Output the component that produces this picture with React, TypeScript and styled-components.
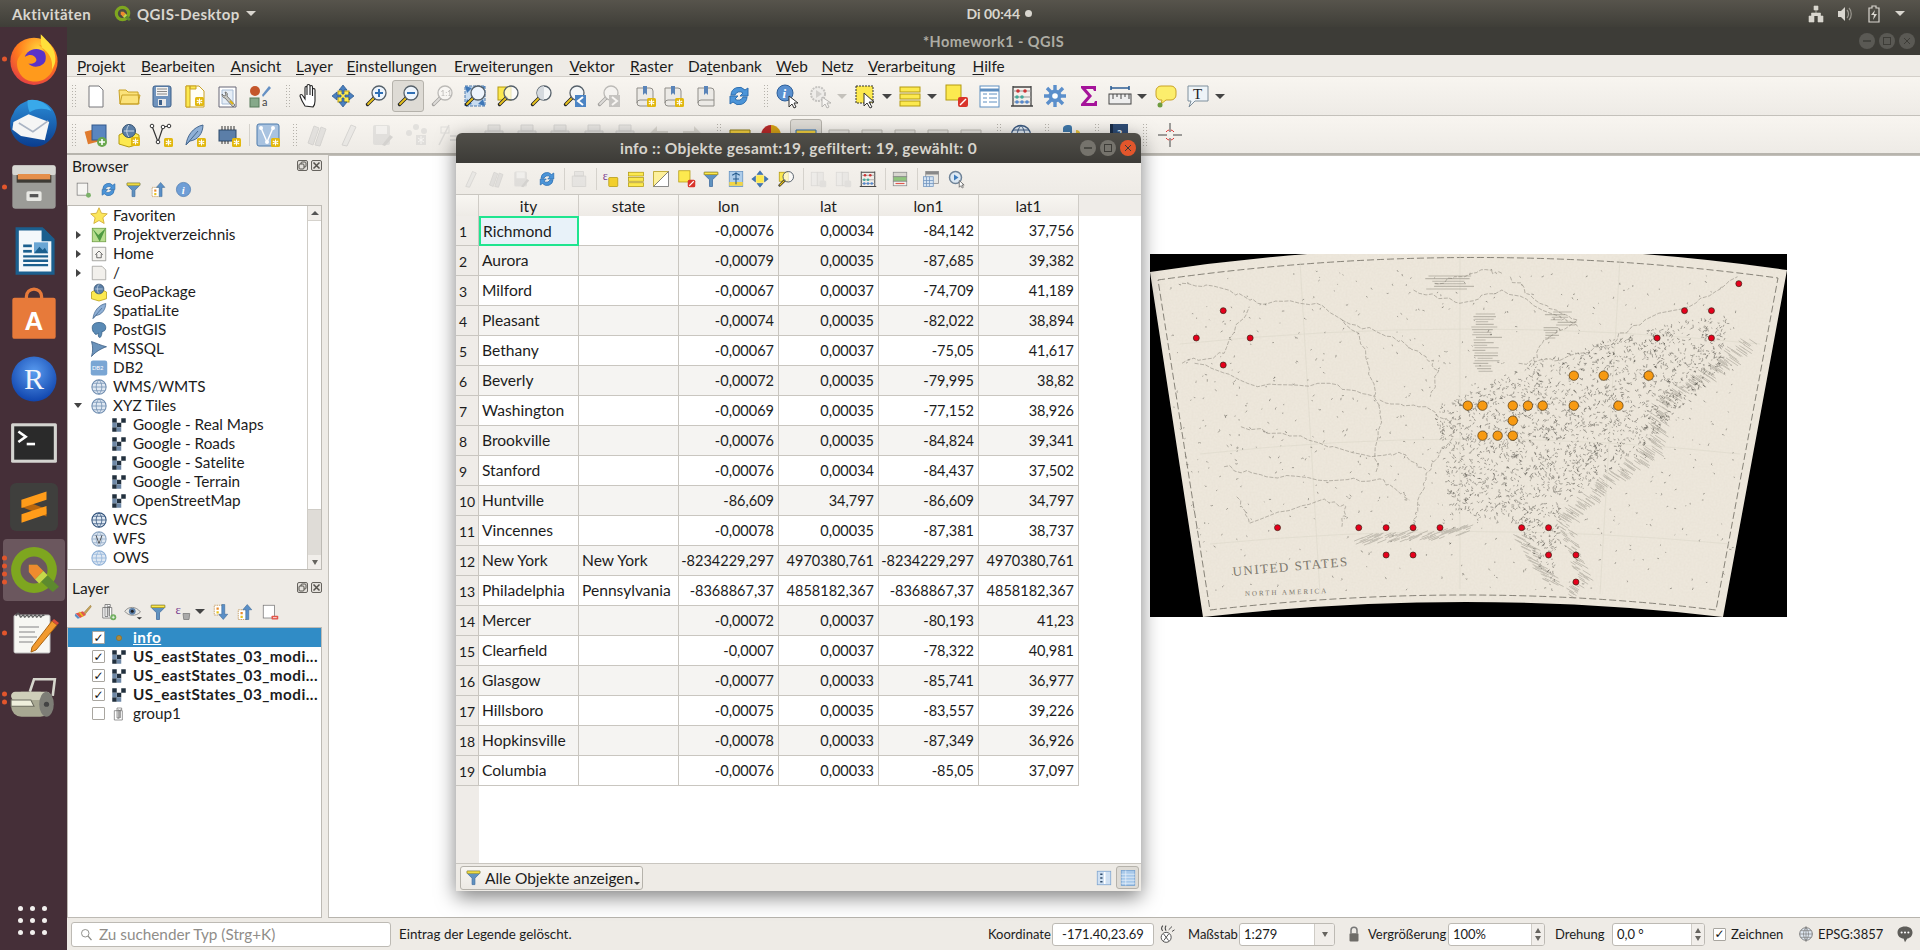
import React, { useMemo } from "react";
import styled, { createGlobalStyle, css } from "styled-components";

const UI = `"Lato", "Noto Sans", "Liberation Sans", sans-serif`;
const Y = "#fce94f", YS = "#b39a10";

const Global = createGlobalStyle`
  html, body { margin: 0; padding: 0; background: #3d3c37; }
  * { box-sizing: border-box; }
  body { font-family: ${UI}; color: #1c1c1c; overflow: hidden; }
`;

const Mag = ({ fill = "#fff", hx = "#e8c21c" }: any) => (
  <>
    <path d="M10 14 3.5 20.5" stroke="#222" strokeWidth="3.4" strokeLinecap="round" />
    <path d="M9.5 14.5 4 20" stroke={hx} strokeWidth="1.8" strokeLinecap="round" />
    <circle cx="15" cy="9" r="7" fill={fill} stroke="#55606a" strokeWidth="1.3" />
  </>
);
const Badge = ({ x = 14, y = 14 }: any) => (
  <>
    <rect x={x} y={y} width="9" height="9" rx="1.5" fill="#e2b80e" />
    <path d={`M${x + 4.5} ${y + 1.5}v6M${x + 1.8} ${y + 3}l5.4 3M${x + 7.2} ${y + 3}l-5.4 3`} stroke="#fff" strokeWidth="1.1" />
  </>
);
const Book = () => (
  <>
    <path d="M4 4h13a3 3 0 0 1 3 3v15H7a3 3 0 0 1-3-3z" fill="#eceae6" stroke="#8f8d88" />
    <path d="M4 19a3 3 0 0 1 3-3h13" fill="none" stroke="#8f8d88" />
    <path d="M10 2h4v9l-2-2-2 2z" fill="#5a84b8" />
  </>
);
const Globe = ({ c = "#6f8db0" }: any) => (
  <>
    <circle cx="12" cy="12" r="9.5" fill="#dfe8f2" stroke={c} strokeWidth="1.4" />
    <path d="M2.5 12h19M12 2.5c-5 5-5 14 0 19M12 2.5c5 5 5 14 0 19M4 7h16M4 17h16" fill="none" stroke={c} />
  </>
);
const Tiles = () => (
  <>
    <rect x="3" y="3" width="18" height="18" fill="#fff" />
    <path d="M3 3h6v6H3zM15 3h6v6h-6zM9 9h6v6H9zM3 15h6v6H3z" fill="#22303e" />
    <path d="M9 15h6v6H9zM3 9h6v6H3z" fill="#6e88a6" />
  </>
);
const Funnel = () => (
  <>
    <path d="M3 3h18v3l-7 7v9h-4v-9L3 6z" fill="#5f92c0" stroke="#3d6a9e" />
    <path d="M3 3h18v3H3z" fill={Y} stroke={YS} />
  </>
);
const Refresh = () => (
  <>
    <path d="M4 11a8 8 0 0 1 14-5l3-2v8h-8l3-3a5 5 0 0 0-8 2z" fill="#4b94d8" stroke="#2e6fb0" />
    <path d="M20 13a8 8 0 0 1-14 5l-3 2v-8h8l-3 3a5 5 0 0 0 8-2z" fill="#4b94d8" stroke="#2e6fb0" />
  </>
);
const Feather = () => (
  <>
    <path d="M4 22C5 13 11 4 21 2c0 8-5 15-13 16z" fill="#8fb0d6" stroke="#46688f" />
    <path d="M4 22 16 8" stroke="#46688f" fill="none" />
  </>
);
const Abc = ({ bg = "#f4d03f", st = "#8c7a1a", c = "#333" }: any) => (
  <>
    <path d="M2 7h20v11H2z" fill={bg} stroke={st} />
    <path d="M5 11h14M5 14h10" stroke={c} strokeWidth="1.5" />
  </>
);
const BlockY = () => (
  <>
    <path d="M2 12 12 7l10 5v9l-10 3-10-3z" fill={Y} stroke={YS} />
    <circle cx="12" cy="8" r="6.5" fill="#5a7ea6" stroke="#33506f" />
    <path d="M7 8h10M12 2c-3 3-3 9 0 12" stroke="#c7d6e6" fill="none" />
  </>
);

const ICONS: Record<string, React.ReactNode> = {
  doc: <path d="M5 2h10l4 4v17H5z" fill="#fff" stroke="#77777a" />,
  folder: <path d="M3 20 2 6h7l2 2h10l1 12zM3 20l2-9h18l-2 9z" fill="#fbe27a" stroke="#c9a227" />,
  save: (
    <>
      <rect x="3" y="2" width="18" height="21" rx="2" fill="#6f93bd" stroke="#3c5f88" />
      <rect x="6" y="3" width="12" height="9" fill="#f3f3f3" />
      <path d="M7 5h10M7 7.5h10M7 10h10" stroke="#888" />
      <rect x="8" y="15" width="8" height="7" fill="#e9e9e9" />
      <rect x="9" y="16" width="3" height="5" fill="#3c5f88" />
    </>
  ),
  saveas: (
    <>
      <path d="M3 2h13l5 5v16H3z" fill="#fffef5" stroke="#c9a227" />
      <path d="M3 2h4v21H3zM7 2h6v3H7z" fill={Y} stroke="#c9a227" />
      <Badge x={12} y={13} />
    </>
  ),
  props: (
    <>
      <path d="M3 3h17v20H3z" fill="#fff" stroke="#667" />
      <path d="M6 6h11v14H6z" fill="#e6eef7" stroke="#a8bdd6" />
      <path d="M9 8c2 0 3 2 2 4l8 9-2 2-8-9c-2 0-3-2-3-4l2 2 2-1z" fill="#c9c9c2" stroke="#555" strokeWidth=".7" />
      <path d="M14 17l3 3" stroke="#e0b515" strokeWidth="2" />
    </>
  ),
  style: (
    <>
      <circle cx="7" cy="7" r="5" fill="#c4562b" />
      <path d="M14 11 21 2l2 2-8 9z" fill="#6590c4" />
      <rect x="2" y="14" width="9" height="9" fill="#86a98a" stroke="#567a5a" />
      <text x="14" y="22" fontSize="11" fontFamily={UI} fill="#444">a</text>
    </>
  ),
  hand: (
    <path d="M7 22c-2-3-4-7-5-10 0-2 2-2 3 0l2 3V4c0-2 2-2 2 0v7-9c0-2 3-2 3 0v9-8c0-2 2.5-2 2.5 0v9-6c0-2 2.5-2 2.5 0v11c0 3-1 5-2 6z" fill="#fff" stroke="#222" strokeWidth="1.1" />
  ),
  pan: (
    <>
      <rect x="7" y="7" width="11" height="11" fill={Y} stroke={YS} />
      <path d="M12 1l4 5h-3v4h-2V6H8zM12 23l4-5h-3v-4h-2v4H8zM1 12l5-4v3h4v2H6v3zM23 12l-5-4v3h-4v2h4v3z" fill="#4a80c0" stroke="#2a5488" strokeWidth=".7" />
    </>
  ),
  zin: (
    <>
      <Mag fill="#eef5fd" />
      <path d="M15 5v8M11 9h8" stroke="#2f6fb5" strokeWidth="2" />
    </>
  ),
  zout: (
    <>
      <Mag fill="#eef5fd" />
      <path d="M11 9h8" stroke="#2f6fb5" strokeWidth="2" />
    </>
  ),
  z11: (
    <>
      <Mag />
      <text x="10.5" y="12" fontSize="8" fontFamily={UI} fill="#555">1:1</text>
    </>
  ),
  zfull: (
    <>
      <path d="M2 2h20v20H2z" fill="#c8dcf0" stroke="#4b79ad" strokeDasharray="3 1" />
      <path d="M2 2l7 2-5 5zM22 2l-7 2 5 5zM22 22l-7-2 5-5zM2 22l2-7 5 5z" fill="#3f78b8" />
      <Mag fill="#eef5fd" />
    </>
  ),
  zsel: (
    <>
      <rect x="2" y="3" width="13" height="13" fill={Y} stroke={YS} />
      <Mag fill="rgba(255,255,255,.7)" />
    </>
  ),
  zlay: (
    <>
      <Mag fill="#f4f6f7" />
      <path d="M15 2a7 7 0 0 0 0 14z" fill="#d5dadf" />
    </>
  ),
  zlast: (
    <>
      <Mag fill="#f4f6f7" />
      <rect x="13" y="11" width="11" height="12" fill="#4b84c4" />
      <path d="M21 13l-5 4 5 4" fill="none" stroke="#fff" strokeWidth="2" />
    </>
  ),
  znext: (
    <>
      <Mag fill="#f4f6f7" />
      <rect x="13" y="11" width="11" height="12" fill="#4b84c4" />
      <path d="M16 13l5 4-5 4" fill="none" stroke="#fff" strokeWidth="2" />
    </>
  ),
  bmkb: (
    <>
      <Book />
      <Badge x={14} y={14} />
    </>
  ),
  bmk: <Book />,
  refresh: <Refresh />,
  identify: (
    <>
      <circle cx="9" cy="9" r="8" fill="#5a90cf" stroke="#2e5f99" />
      <text x="6.5" y="14" fontSize="13" fontStyle="italic" fontWeight="700" fontFamily="Liberation Serif" fill="#fff">i</text>
      <path d="M13 12v11l3-3 2 4 2-1-2-4h4z" fill="#fff" stroke="#333" />
    </>
  ),
  action: (
    <>
      <circle cx="10" cy="10" r="7" fill="#dde6ee" stroke="#778" strokeWidth="2" strokeDasharray="2 1" />
      <path d="M8 6v8l6-4z" fill="#6f9fd0" />
      <path d="M14 13v10l3-3 2 4 2-1-2-4h4z" fill="#fff" stroke="#555" />
    </>
  ),
  select: (
    <>
      <rect x="2" y="2" width="17" height="17" fill={Y} stroke="#333" strokeDasharray="2 1" />
      <path d="M10 9v13l3-3 3 5 2-1-3-5h5z" fill="#fff" stroke="#333" />
    </>
  ),
  selattr: (
    <>
      <rect x="2" y="3" width="20" height="5" fill={Y} stroke={YS} />
      <rect x="2" y="10" width="20" height="5" fill={Y} stroke={YS} />
      <rect x="2" y="17" width="20" height="5" fill={Y} stroke={YS} />
    </>
  ),
  deselect: (
    <>
      <rect x="1" y="1" width="15" height="15" fill={Y} stroke={YS} />
      <rect x="13" y="13" width="10" height="10" rx="2" fill="#d9342b" />
      <path d="M15 21l6-6" stroke="#fff" strokeWidth="1.5" />
    </>
  ),
  table: (
    <>
      <rect x="3" y="2" width="19" height="21" fill="#fff" stroke="#5f8fc0" />
      <path d="M3 6h19" stroke="#5f8fc0" strokeWidth="3" />
      <path d="M6 10h4M6 14h4M6 18h4M12 10h8M12 14h8M12 18h8" stroke="#5f8fc0" />
    </>
  ),
  abacus: (
    <>
      <path d="M3 2v20M21 2v20M1 22h22M3 3h18" stroke="#444" strokeWidth="1.3" fill="none" />
      <path d="M3 7h18M3 13h18M3 18h18" stroke="#999" />
      <circle cx="8" cy="7" r="1.8" fill="#c33" /><circle cx="15" cy="7" r="1.8" fill="#c33" />
      <circle cx="7" cy="13" r="1.8" fill="#4a9" /><circle cx="12" cy="13" r="1.8" fill="#4a9" />
      <circle cx="7" cy="18" r="1.8" fill="#58c" /><circle cx="12" cy="18" r="1.8" fill="#58c" /><circle cx="17" cy="18" r="1.8" fill="#58c" />
    </>
  ),
  gear: (
    <>
      <path d="M12 1v6M12 17v6M1 12h6M17 12h6M4 4l4 4M16 16l4 4M20 4l-4 4M8 16l-4 4" stroke="#5b8fcb" strokeWidth="3.4" />
      <circle cx="12" cy="12" r="6.5" fill="#5b8fcb" />
      <circle cx="12" cy="12" r="2.8" fill="#fff" />
    </>
  ),
  sigma: <path d="M5 2h15v5h-2l-1-2H10l6 7-6 7h8l1-2h2v5H5v-2l7-8-7-8z" fill="#a5139a" />,
  measure: (
    <>
      <path d="M3 4h18M3 2v4M21 2v4" stroke="#2f5f95" strokeWidth="1.6" />
      <rect x="1" y="10" width="22" height="10" fill="#eee" stroke="#444" />
      <path d="M5 10v5M9 10v3M13 10v5M17 10v3M21 10v5" stroke="#444" />
    </>
  ),
  tip: (
    <>
      <path d="M2 7a5 5 0 0 1 5-5h10a5 5 0 0 1 5 5v4a5 5 0 0 1-5 5h-5l-5 4 1-4a5 5 0 0 1-6-5z" fill="#fcee6c" stroke="#c9a227" />
      <circle cx="6" cy="21" r="2.5" fill="#6e9c3f" />
    </>
  ),
  label: (
    <>
      <path d="M2 2h20v15H9l-6 6 2-6H2z" fill="#eef4f8" stroke="#7f8f9c" />
      <text x="7" y="15" fontSize="15" fontFamily="Liberation Serif" fill="#222">T</text>
    </>
  ),
  dsm: (
    <>
      <rect x="2" y="7" width="13" height="13" fill="#e07b2e" transform="rotate(-15 8 13)" />
      <rect x="8" y="2" width="14" height="15" fill="#5a86c0" stroke="#33598c" />
      <circle cx="18" cy="19" r="5" fill="#6aa84f" />
      <path d="M18 16v6M15 19h6" stroke="#fff" strokeWidth="1.6" />
    </>
  ),
  gpkg: (
    <>
      <BlockY />
      <Badge x={14} y={14} />
    </>
  ),
  block: <BlockY />,
  vnew: (
    <>
      <path d="M3 3l6 16 5-15" fill="none" stroke="#333" strokeWidth="1.2" />
      <path d="M14 4l6-1" stroke="#333" />
      <circle cx="3" cy="3" r="1.8" fill="#fff" stroke="#333" /><circle cx="9" cy="19" r="1.8" fill="#fff" stroke="#333" /><circle cx="14" cy="4" r="1.8" fill="#fff" stroke="#333" /><circle cx="20" cy="3" r="1.8" fill="#fff" stroke="#333" />
      <Badge x={15} y={15} />
    </>
  ),
  feather: (
    <>
      <Feather />
      <Badge x={15} y={15} />
    </>
  ),
  chip: (
    <>
      <rect x="2" y="7" width="17" height="11" fill="#5b7ea8" stroke="#2f4a6a" />
      <path d="M5 3v4M8 3v4M11 3v4M14 3v4M17 3v4M5 18v3M8 18v3M11 18v3" stroke="#333" />
      <Badge x={15} y={15} />
    </>
  ),
  vbox: (
    <>
      <rect x="1" y="1" width="22" height="22" rx="2" fill="#a9c3e0" stroke="#4d7aab" />
      <path d="M5 5l6 14 6-14" fill="none" stroke="#fff" strokeWidth="1.4" />
      <circle cx="5" cy="5" r="2" fill="#fff" /><circle cx="17" cy="5" r="2" fill="#fff" /><circle cx="11" cy="19" r="2" fill="#fff" />
      <Badge x={15} y={15} />
    </>
  ),
  pencils: <path d="M2 20 8 3l5 2-6 17zM9 22 15 4l5 2-6 17z" fill="#c9c5bc" stroke="#a9a59c" />,
  pencil: <path d="M5 22 14 2l5 2-9 19z" fill="#dedad2" stroke="#a9a59c" />,
  editsave: (
    <>
      <rect x="3" y="2" width="17" height="20" rx="2" fill="#c7c4bc" />
      <rect x="6" y="3" width="11" height="8" fill="#eee" />
      <path d="M12 22l8-10 3 2-8 9z" fill="#a9a59c" />
    </>
  ),
  nodes: (
    <>
      <circle cx="5" cy="10" r="3" fill="#c7c4bc" /><circle cx="12" cy="4" r="3" fill="#c7c4bc" /><circle cx="20" cy="8" r="3" fill="#c7c4bc" />
      <rect x="12" y="12" width="10" height="10" fill="#c7c4bc" />
      <path d="M17 13v8M14 15l6 4M20 15l-6 4" stroke="#fff" />
    </>
  ),
  delnode: (
    <>
      <path d="M2 22 12 2" stroke="#bbb" strokeWidth="1.5" />
      <rect x="4" y="4" width="8" height="6" fill="none" stroke="#bbb" />
      <path d="M13 13h9M13 17h9" stroke="#bbb" strokeWidth="2" />
    </>
  ),
  tools: <path d="M3 8h18v14H3zM6 2h12v6H6z" fill="#d6d3cb" stroke="#aaa69d" />,
  back: <path d="M2 12l9-9v5h11v8H11v5z" fill="#dad7d0" />,
  fwd: <path d="M22 12l-9-9v5H2v8h11v5z" fill="#dad7d0" />,
  abc: <Abc />,
  abcA: <Abc bg="#f4d03f" st="#2f6fb5" />,
  abcG: <Abc bg="#e8e6e1" st="#bdbab3" c="#bdbab3" />,
  colors: (
    <>
      <path d="M12 12V2a10 10 0 0 1 9 14z" fill="#d4a017" />
      <path d="M12 12l9 4A10 10 0 0 1 3 16z" fill="#3c8c3c" />
      <path d="M12 12 3 16A10 10 0 0 1 12 2z" fill="#b72a2a" />
    </>
  ),
  globe: <Globe c="#3c5a80" />,
  python: (
    <>
      <path d="M12 2c-5 0-6 2-6 4v3h7v1H4c-3 0-3 4-3 5s1 3 4 3V14h10V5c0-2-1-3-3-3z" fill="#3f77a8" />
      <path d="M12 23c5 0 6-2 6-4v-3h-7v-1h9c3 0 3-4 3-5s-1-3-4-3v4H9v9c0 2 1 3 3 3z" fill="#e7c33c" />
    </>
  ),
  helpbook: (
    <>
      <rect x="3" y="1" width="18" height="22" fill="#2e4b74" />
      <rect x="3" y="1" width="3" height="22" fill="#1a2c46" />
      <text x="10" y="15" fontSize="11" fontWeight="700" fontFamily={UI} fill="#dfe8f2">?</text>
    </>
  ),
  cross: (
    <>
      <path d="M12 0v9M12 15v9M0 12h9M15 12h9" stroke="#444" />
      <path d="M8 9a5 5 0 0 1 3-2M16 9a5 5 0 0 0-3-2M8 15a5 5 0 0 0 3 2M16 15a5 5 0 0 1-3 2" stroke="#d33" fill="none" />
    </>
  ),
  panelAdd: (
    <>
      <rect x="3" y="3" width="15" height="17" fill="#f6f5f2" stroke="#777" />
      <circle cx="19" cy="20" r="3.5" fill="#7cb26a" />
    </>
  ),
  funnel: <Funnel />,
  collapse: (
    <>
      <rect x="3" y="9" width="11" height="13" fill="#fff" stroke="#b98c4a" strokeDasharray="2 1" />
      <path d="M15 2l6 7h-4v13h-4V9H9z" fill="#5a8fc7" stroke="#34618f" strokeWidth=".7" />
      <rect x="6" y="12" width="3" height="3" fill="#e8892b" />
      <rect x="6" y="17" width="3" height="3" fill="#e8c21c" />
    </>
  ),
  expand: (
    <>
      <rect x="3" y="3" width="11" height="13" fill="#fff" stroke="#b98c4a" strokeDasharray="2 1" />
      <path d="M15 22l6-7h-4V2h-4v13H9z" fill="#5a8fc7" stroke="#34618f" strokeWidth=".7" />
      <rect x="6" y="6" width="3" height="3" fill="#e8892b" />
      <rect x="6" y="11" width="3" height="3" fill="#e8c21c" />
    </>
  ),
  info: (
    <>
      <circle cx="12" cy="12" r="10" fill="#6f9ed6" stroke="#4a78ad" />
      <text x="9.5" y="18" fontSize="15" fontWeight="700" fontStyle="italic" fontFamily="Liberation Serif" fill="#fff">i</text>
    </>
  ),
  brush: (
    <>
      <path d="M12 14 22 3l1 2-9 11z" fill="#c8a55a" stroke="#8a6a26" strokeWidth=".6" />
      <path d="M2 14l10-3 4 5-8 4z" fill="#e2574c" />
      <path d="M2 14l6 6-3 1-4-4z" fill="#5a8fc7" />
      <path d="M7 12l5 6" stroke="#e8c21c" strokeWidth="2" />
    </>
  ),
  addgroup: (
    <>
      <path d="M8 2h7v3h-3v13H8zM5 6h12v14H5z" fill="#fff" stroke="#666" />
      <path d="M11 3v14M14 5v13" stroke="#666" />
      <circle cx="19" cy="19" r="4" fill="#6fae5e" />
      <path d="M19 17v4M17 19h4" stroke="#fff" />
    </>
  ),
  eye: (
    <>
      <path d="M1 11c5-7 15-7 21 1-6 6-16 6-21-1z" fill="#e6e6e2" stroke="#777" />
      <circle cx="11" cy="11" r="4.5" fill="#5b7fa8" />
      <circle cx="11" cy="11" r="2" fill="#222" />
      <path d="M17 19h7l-3.5 3z" fill="#333" />
    </>
  ),
  expr: (
    <>
      <text x="2" y="14" fontSize="17" fontFamily="Liberation Serif" fill="#7a3d8f">ε</text>
      <path d="M12 14h9l-1 8h-7z" fill="#aaa" stroke="#777" />
    </>
  ),
  exprY: (
    <>
      <text x="1" y="13" fontSize="16" fontFamily="Liberation Serif" fill="#7a3d8f">ε</text>
      <rect x="9" y="10" width="12" height="12" rx="1" fill="#f2cf2c" stroke="#b39a10" />
    </>
  ),
  remove: (
    <>
      <rect x="3" y="3" width="15" height="17" fill="#fff" stroke="#777" />
      <rect x="14" y="17" width="9" height="5" rx="1" fill="#e2574c" />
      <path d="M16 19.5h5" stroke="#fff" />
    </>
  ),
  star: <path d="M12 1l3.3 7.3 7.700.8-5.800 5.200 1.700 7.700L12 18l-6.900 4 1.700-7.700L1 9.100l7.700-.8z" fill="#fbe65b" stroke="#c9a227" />,
  proj: (
    <>
      <rect x="3" y="3" width="18" height="18" fill="#b8de8f" stroke="#6a9a3e" />
      <path d="M3 3l8 9 10-9-8 18" fill="#4f9a42" />
    </>
  ),
  home: (
    <>
      <path d="M3 3h18v18H3z" fill="#f5f4f0" stroke="#8a8a85" />
      <path d="M7 13l5-5 5 5M9 12v5h6v-5" fill="none" stroke="#444" />
    </>
  ),
  dir: <path d="M3 3h13l5 5v13H3z" fill="#f2f0ec" stroke="#9a9a95" />,
  pg: <path d="M3 9c0-5 4-7 9-7s9 2 9 7c0 4-3 5-5 5 0 3-1 8-3 8s-2-3-2-6c-2 2-4 3-5 0-2-1-3-4-3-7z" fill="#5a8ab5" stroke="#2d5a82" />,
  mssql: <path d="M2 2c6 2 12 5 20 7-6 2-14 6-20 13 2-7 2-13 0-20z" fill="#6b93bb" stroke="#375a80" />,
  db2: (
    <>
      <rect x="1" y="2" width="22" height="20" rx="3" fill="#7aa6d4" />
      <text x="2.5" y="15" fontSize="7.8" fontFamily={UI} fill="#fff">DB2</text>
    </>
  ),
  wms: <Globe c="#6f8db0" />,
  wcs: <Globe c="#32537c" />,
  wfs: (
    <>
      <Globe c="#8fa8c4" />
      <path d="M8 7l4 11 4-11" fill="none" stroke="#333" />
    </>
  ),
  ows: <Globe c="#8fb1d8" />,
  tiles: <Tiles />,
  spatial: <Feather />,
  point: <circle cx="12" cy="12" r="3.5" fill="#b08a3a" stroke="#8d6f2c" />,
  grp: (
    <>
      <path d="M9 3h7v3h-3v12H9zM5 7h12v14H5z" fill="#fff" stroke="#666" />
      <path d="M11 5v14M14 7v11" stroke="#666" />
    </>
  ),
  fields: (
    <>
      <rect x="3" y="3" width="8" height="18" fill="#e8e6e1" stroke="#b9b6ae" />
      <rect x="11" y="3" width="8" height="18" fill="#dedbd4" stroke="#b9b6ae" />
      <rect x="14" y="14" width="9" height="9" rx="2" fill="#ccc9c2" />
    </>
  ),
  condFmt: (
    <>
      <rect x="3" y="3" width="18" height="6" fill="#d8d6d0" stroke="#888" />
      <rect x="3" y="9" width="18" height="6" fill="#8fc47c" stroke="#888" />
      <rect x="3" y="15" width="18" height="6" fill="#f2f1ed" stroke="#888" />
      <path d="M6 18h12" stroke="#e2574c" strokeWidth="1.5" />
    </>
  ),
  dock: (
    <>
      <rect x="5" y="2" width="17" height="16" fill="#e8e6e1" stroke="#888" />
      <rect x="5" y="2" width="17" height="4" fill="#888" />
      <rect x="2" y="9" width="13" height="13" fill="#d4e3f2" stroke="#6f93bd" />
      <path d="M2 14h13M2 18h13M6 9v13M10 9v13" stroke="#6f93bd" />
    </>
  ),
  run: (
    <>
      <circle cx="10" cy="10" r="8" fill="#dce8f3" stroke="#6f8397" strokeWidth="2" />
      <path d="M8 6v8l6-4z" fill="#3d7cbd" />
      <path d="M15 14v9l2-2 2 3 1.5-1-2-3h3z" fill="#fff" stroke="#555" />
    </>
  ),
  sel2: (
    <>
      <path d="M2 2h20L2 22z" fill="#fdf09b" stroke={YS} />
      <path d="M22 2v20H2z" fill="#fff" stroke="#666" />
    </>
  ),
  center: (
    <>
      <rect x="3" y="2" width="18" height="20" fill="#aecdea" stroke="#5f8fc0" />
      <rect x="3" y="16" width="18" height="5" fill="#f2d544" />
      <path d="M12 3v16M7 7l5-3 5 3M8 12h8" stroke="#245a8c" strokeWidth="1.4" fill="none" />
    </>
  ),
  pan2: (
    <>
      <rect x="7" y="7" width="10" height="10" fill={Y} />
      <path d="M12 1l4 5H8zM12 23l4-5H8zM1 12l5-4v8zM23 12l-5-4v8z" fill="#3f78b8" stroke="#244f83" strokeWidth=".6" />
    </>
  ),
  zsel2: (
    <>
      <rect x="3" y="3" width="12" height="12" fill={Y} stroke={YS} />
      <Mag fill="rgba(255,255,255,.65)" />
    </>
  ),
  form: (
    <>
      <rect x="3" y="3" width="18" height="18" fill="#cfe0f2" stroke="#7ba3cf" />
      <path d="M7 7h3M7 12h3M7 17h3" stroke="#2f4a6a" strokeWidth="2" />
      <path d="M13 4v16" stroke="#fff" strokeWidth="2" />
    </>
  ),
  grid: (
    <>
      <rect x="3" y="2" width="18" height="20" fill="#a9c9ea" stroke="#6f9ed0" />
      <path d="M9 2v20M3 7h18M3 11h18M3 15h18M3 19h18" stroke="#e8f1fa" />
    </>
  ),
  search: (
    <>
      <circle cx="10" cy="10" r="6" fill="none" stroke="#8a8a85" strokeWidth="1.5" />
      <path d="M14.5 14.5 20 21" stroke="#8a8a85" strokeWidth="2" />
    </>
  ),
  pointer: (
    <>
      <path d="M7 2c-2 2-2 5 0 6M11 2c-2 2-1 5 0 6" fill="none" stroke="#444" strokeWidth="1.3" />
      <circle cx="11" cy="16" r="6" fill="#fff" stroke="#333" />
      <path d="M8 12l6 8M14 12l-6 8M18 3l-4 4M21 7l-3 2" stroke="#333" />
    </>
  ),
  lock: (
    <>
      <path d="M8 11V7a4 4 0 0 1 8 0v4" fill="none" stroke="#777" strokeWidth="2" />
      <rect x="6" y="11" width="12" height="11" rx="1.5" fill="#6e6c68" />
    </>
  ),
  crs: (
    <>
      <Globe c="#777" />
      <path d="M12 0v24" stroke="#777" />
    </>
  ),
  msg: (
    <>
      <path d="M12 2c6 0 10 3 10 8s-4 8-7 8l-3 5-2-5c-4 0-8-3-8-8s4-8 10-8z" fill="#5e5d59" />
      <circle cx="7.5" cy="10" r="1.4" fill="#fff" /><circle cx="12" cy="10" r="1.4" fill="#fff" /><circle cx="16.5" cy="10" r="1.4" fill="#fff" />
    </>
  ),
};

const DOCK: Record<string, React.ReactNode> = {
  firefox: (
    <>
      <defs>
        <radialGradient id="ffa" cx=".6" cy=".25" r=".9"><stop offset="0" stopColor="#ffd43a" /><stop offset=".5" stopColor="#ff7a1c" /><stop offset="1" stopColor="#d92a52" /></radialGradient>
      </defs>
      <circle cx="24" cy="26" r="21" fill="url(#ffa)" />
      <circle cx="26" cy="26" r="11" fill="#5b32c8" />
      <path d="M16 22c5-3 9-1 10 2 1 3-4 5-7 4 3 4 12 4 15-2 2-6-2-12-6-15 6 1 14 6 14 16 0 10-9 18-19 17C13 43 8 34 9 26c1-4 4-7 7-10-1 3-1 5 0 6z" fill="#ff9a1c" />
      <path d="M30 2c6 6 13 12 13 22 0 4-1 6-3 9 1-9-3-15-9-19-1-4-1-8-1-12z" fill="#ffe03a" />
    </>
  ),
  thunder: (
    <>
      <defs>
        <linearGradient id="tba" x1="0" y1="0" x2="0" y2="1"><stop offset="0" stopColor="#2b8cd6" /><stop offset="1" stopColor="#0a3d8f" /></linearGradient>
      </defs>
      <path d="M24 3c12 0 21 9 21 21S36 46 24 46 2 37 2 25c0-4 1-7 3-10 2-6 9-12 19-12z" fill="url(#tba)" />
      <path d="M5 23l14-7 19 7-4 17-22-4-8-6z" fill="#f5f5f5" />
      <path d="M10 24l13 8 14-10" fill="none" stroke="#aab4c4" strokeWidth="1.5" />
      <path d="M18 3c8-2 18 2 22 10-6-3-14-3-20 1-2-4-2-8-2-11z" fill="#39a9ea" />
    </>
  ),
  files: (
    <>
      <rect x="4" y="4" width="40" height="40" rx="3" fill="#9b9b97" />
      <rect x="4" y="4" width="40" height="9" rx="2" fill="#d8d8d3" />
      <rect x="8" y="13" width="32" height="7" fill="#3d3a34" />
      <rect x="9" y="12" width="30" height="5" fill="#e58f4b" />
      <rect x="17" y="28" width="14" height="9" rx="1.5" fill="#e8e8e4" />
      <rect x="20" y="30.5" width="8" height="3" fill="#555" />
    </>
  ),
  writer: (
    <>
      <path d="M7 2h25l11 11v33H7z" fill="#1b5f8e" />
      <path d="M10 5h21v10h9v28H10z" fill="#f4f8fb" />
      <path d="M33 3l8 9h-8z" fill="#1b5f8e" />
      <rect x="14" y="18" width="8" height="2.5" fill="#1b5f8e" />
      <rect x="14" y="23" width="8" height="2.5" fill="#1b5f8e" />
      <rect x="24" y="16" width="13" height="10" fill="#6aa6d4" />
      <path d="M24 26l5-6 3 3 2-2 3 5z" fill="#1b5f8e" />
      <path d="M14 29h23M14 33h23M14 37h23" stroke="#1b5f8e" strokeWidth="2.2" />
    </>
  ),
  store: (
    <>
      <rect x="4" y="8" width="40" height="38" rx="2" fill="#e77a3a" />
      <path d="M17 11V7a7 7 0 0 1 14 0v4" fill="none" stroke="#e77a3a" strokeWidth="3" />
      <text x="24" y="38" textAnchor="middle" fontSize="24" fontWeight="700" fontFamily="Liberation Sans" fill="#fff">A</text>
    </>
  ),
  r: (
    <>
      <defs>
        <radialGradient id="rb" cx=".5" cy=".35" r=".7"><stop offset="0" stopColor="#5a9cf0" /><stop offset="1" stopColor="#0a3ea8" /></radialGradient>
      </defs>
      <circle cx="24" cy="24" r="22.5" fill="url(#rb)" />
      <text x="24" y="34" textAnchor="middle" fontSize="30" fontFamily="Liberation Serif" fill="#f2f5fa">R</text>
    </>
  ),
  term: (
    <>
      <rect x="2" y="5" width="44" height="38" rx="1.5" fill="#d4d4d0" />
      <rect x="5" y="8" width="38" height="32" fill="#2a2a2a" />
      <path d="M9 13l7 5-7 5" fill="none" stroke="#fff" strokeWidth="2.5" />
      <path d="M17 25h8" stroke="#fff" strokeWidth="2.5" />
    </>
  ),
  sublime: (
    <>
      <rect x="1" y="1" width="46" height="46" rx="6" fill="#3f3f3d" />
      <path d="M12 17l24 9v7l-24-9z" fill="#b8660e" />
      <path d="M36 9v8l-24 8v-8z" fill="#ff9c1a" />
      <path d="M12 31v8l24-8v-8z" fill="#ff9c1a" />
    </>
  ),
  qgis: (
    <>
      <path d="M24 2a22 22 0 1 0 0 44 22 22 0 0 0 0-44zm0 9a13 13 0 1 1 0 26 13 13 0 0 1 0-26z" fill="#7ea61f" />
      <path d="M19 19h8l21 21-6 5-23-20z" fill="#5d8a2e" />
      <path d="M19 19h8l6 6-8 8-6-7z" fill="#ee8b2e" />
      <path d="M25 33l8-8 4 4-8 8z" fill="#c6d84a" />
    </>
  ),
  gedit: (
    <>
      <rect x="4" y="6" width="36" height="38" rx="1.5" fill="#f7f7f3" stroke="#bbb" />
      <path d="M6 7c1-4 3-4 4 0s3-4 4 0 3-4 4 0 3-4 4 0 3-4 4 0 3-4 4 0 3-4 4 0" fill="none" stroke="#555" strokeWidth="1.2" />
      <path d="M9 18h20M9 23h16M9 28h18M9 33h14" stroke="#aaa" strokeWidth="1.4" />
      <path d="M22 38l20-26 5 4-21 25-5 2z" fill="#f29a2e" stroke="#a86412" />
      <path d="M42 12l2-2 5 4-2 2z" fill="#d94c3a" />
    </>
  ),
  roller: (
    <>
      <path d="M20 18l4-12h20l-2 16" fill="none" stroke="#d6d6cd" strokeWidth="2.5" />
      <rect x="2" y="18" width="38" height="24" rx="10" fill="#a8a892" />
      <rect x="2" y="18" width="38" height="8" rx="4" fill="#cfcfba" />
      <ellipse cx="36" cy="30" rx="7" ry="12" fill="#7d7d76" />
      <circle cx="36" cy="30" r="2.5" fill="#444" />
      <path d="M2 32h22l-3-6H2z" fill="#efefdc" stroke="#6b6b5e" />
    </>
  ),
};

const IcoSvg = styled.svg<{ $dim?: boolean }>`
  display: block;
  flex: none;
  overflow: visible;
  ${(p) =>
    p.$dim &&
    css`
      filter: grayscale(1) opacity(0.38);
    `}
`;
const Ico = ({ k, s = 24, dim }: { k: string; s?: number; dim?: boolean }) => (
  <IcoSvg viewBox="0 0 24 24" width={s} height={s} $dim={dim}>
    {ICONS[k]}
  </IcoSvg>
);

const Root = styled.div`
  position: relative;
  width: 1920px;
  height: 950px;
  overflow: hidden;
  display: flex;
  flex-direction: column;
  font-size: 14.5px;
`;
const TopBar = styled.header`
  height: 27px;
  flex: none;
  display: flex;
  align-items: center;
  position: relative;
  background: linear-gradient(#57544c, #3f3e38);
  color: #d9d6cf;
  font-weight: 700;
  font-size: 15px;
  letter-spacing: 0.4px;
`;
const TopItem = styled.span<{ $ml: number; $w: number; $fs?: number }>`
  margin-left: ${(p) => p.$ml}px;
  width: ${(p) => p.$w}px;
  flex: none;
  white-space: nowrap;
  display: flex;
  align-items: center;
  ${(p) => (p.$fs ? `font-size: ${p.$fs}px; letter-spacing: 0;` : "")}
`;
const Caret = styled.span<{ $ml?: number; $c?: string }>`
  display: inline-block;
  margin-left: ${(p) => p.$ml ?? 6}px;
  border-left: 5px solid transparent;
  border-right: 5px solid transparent;
  border-top: 5px solid ${(p) => p.$c ?? "#d9d6cf"};
`;
const Tray = styled.div`
  margin-left: auto;
  display: flex;
  align-items: center;
  gap: 13px;
  padding-right: 15px;
`;
const RecDot = styled.span`
  width: 7px;
  height: 7px;
  border-radius: 50%;
  background: #d9d6cf;
  margin-left: 5px;
`;
const Body = styled.div`
  flex: 1;
  display: flex;
  min-height: 0;
`;
const Dock = styled.nav`
  width: 67px;
  flex: none;
  display: flex;
  flex-direction: column;
  align-items: center;
  background: #452f38;
  position: relative;
`;
const DockSlot = styled.div<{ $h: number; $active?: boolean }>`
  position: relative;
  width: 62px;
  height: ${(p) => p.$h}px;
  display: flex;
  align-items: center;
  justify-content: center;
  border-radius: 4px;
  background: ${(p) => (p.$active ? "#6b575e" : "transparent")};
`;
const Pips = styled.div`
  position: absolute;
  left: -1px;
  top: 50%;
  transform: translateY(-50%);
  display: flex;
  flex-direction: column;
  gap: 3px;
`;
const Pip = styled.span`
  width: 5px;
  height: 5px;
  border-radius: 50%;
  background: #e2562c;
`;
const AppsGrid = styled.div`
  position: absolute;
  bottom: 15px;
  left: 18px;
  display: grid;
  grid-template-columns: repeat(3, 5px);
  gap: 7px;
`;
const AppDot = styled.span`
  width: 5px;
  height: 5px;
  border-radius: 50%;
  background: #f2f0ee;
`;
const AppWin = styled.div`
  flex: 1;
  min-width: 0;
  display: flex;
  flex-direction: column;
  background: #eeebe6;
`;
const TitleBar = styled.div`
  height: 28px;
  flex: none;
  display: flex;
  align-items: center;
  justify-content: center;
  position: relative;
  background: #3d3c37;
  color: #aeaca4;
  font-weight: 700;
  font-size: 14.5px;
  letter-spacing: 0.45px;
`;
const WinBtns = styled.div`
  position: absolute;
  right: 5px;
  top: 50%;
  transform: translateY(-50%);
  display: flex;
  gap: 4px;
`;
const WinBtn = styled.span<{ $bg: string; $fg: string }>`
  width: 16px;
  height: 16px;
  border-radius: 50%;
  background: ${(p) => p.$bg};
  color: ${(p) => p.$fg};
  display: flex;
  align-items: center;
  justify-content: center;
`;
const MenuBar = styled.div`
  height: 22px;
  flex: none;
  display: flex;
  align-items: center;
  padding-left: 10px;
  border-bottom: 1px solid #d3cfc9;
  background: #eeebe6;
`;
const MenuItem = styled.span<{ $w: number }>`
  width: ${(p) => p.$w}px;
  white-space: nowrap;
  font-size: 15.4px;
  u {
    text-decoration-thickness: 1px;
    text-underline-offset: 2px;
  }
`;
const Toolbar = styled.div<{ $last?: boolean }>`
  height: 39px;
  flex: none;
  display: flex;
  align-items: center;
  background: linear-gradient(#f8f5f0, #eeebe6);
  border-bottom: ${(p) => (p.$last ? "2px solid #b7b4ad" : "1px solid #c4c1bb")};
`;
const WinToolbar = styled.div`
  height: 32px;
  flex: none;
  display: flex;
  align-items: center;
  background: linear-gradient(#f4f1ec, #eeebe6);
  border-bottom: 1px solid #c9c6c0;
`;
const Tool = styled.div<{ $ml: number; $active?: boolean }>`
  position: relative;
  width: 24px;
  height: 24px;
  flex: none;
  margin-left: ${(p) => p.$ml}px;
  display: flex;
  align-items: center;
  justify-content: center;
  ${(p) =>
    p.$active &&
    css`
      &::before {
        content: "";
        position: absolute;
        inset: -4px;
        border: 1px solid #b5b2ab;
        border-radius: 3px;
        background: #dedbd5;
      }
      & > * {
        position: relative;
      }
    `}
`;
const Grip = styled.span`
  width: 6px;
  height: 24px;
  background-image: radial-gradient(circle, #b5b2ab 0.8px, transparent 1px);
  background-size: 3px 3px;
`;
const Sep = styled.span`
  width: 1px;
  height: 22px;
  background: #d5d2cc;
`;
type TI = { k: string; c: number; dim?: boolean; active?: boolean };
const Tools = ({ items, start, s = 24 }: { items: TI[]; start: number; s?: number }) => {
  let prev = start;
  return (
    <>
      {items.map((it, i) => {
        const ml = it.c - 12 - prev;
        prev = it.c + 12;
        return (
          <Tool key={i} $ml={ml} $active={it.active}>
            {it.k === "grip" ? <Grip /> : it.k === "sep" ? <Sep /> : it.k === "drop" ? <Caret $ml={0} $c={it.dim ? "#c4c1bb" : "#444"} /> : <Ico k={it.k} dim={it.dim} s={s} />}
          </Tool>
        );
      })}
    </>
  );
};
const t = (k: string, c: number, o: Partial<TI> = {}): TI => ({ k, c, ...o });
const dm = { dim: true };
const T1: TI[] = [
  t("grip", 74), t("doc", 96), t("folder", 129), t("save", 162), t("saveas", 195), t("props", 228), t("style", 260), t("grip", 288),
  t("hand", 310), t("pan", 343), t("zin", 376), t("zout", 408, { active: true }), t("z11", 442, dm), t("zfull", 475), t("zsel", 508), t("zlay", 541),
  t("zlast", 574), t("znext", 608, dm), t("bmkb", 645), t("bmkb", 673), t("bmk", 706), t("refresh", 739), t("grip", 766), t("identify", 788),
  t("action", 820, dm), t("drop", 842, dm), t("select", 866), t("drop", 887), t("selattr", 910), t("drop", 932), t("deselect", 957), t("table", 989),
  t("abacus", 1022), t("gear", 1055), t("sigma", 1088), t("measure", 1120), t("drop", 1142), t("tip", 1166), t("label", 1198), t("drop", 1220),
];
const T2: TI[] = [
  t("grip", 74), t("dsm", 96), t("gpkg", 129), t("vnew", 161), t("feather", 194), t("chip", 229), t("sep", 249), t("vbox", 268), t("grip", 295),
  t("pencils", 318, dm), t("pencil", 349, dm), t("editsave", 382, dm), t("nodes", 416, dm), t("delnode", 449, dm), t("tools", 494, dm), t("tools", 527, dm), t("tools", 560, dm),
  t("tools", 594, dm), t("tools", 625, dm), t("back", 658), t("fwd", 693), t("grip", 719), t("abc", 740), t("colors", 771), t("abcA", 806, { active: true }),
  t("abcG", 839), t("abcG", 872), t("abcG", 905), t("abcG", 938), t("abcG", 971), t("grip", 999), t("globe", 1021), t("grip", 1047), t("python", 1069),
  t("grip", 1097), t("helpbook", 1119), t("grip", 1145), t("cross", 1170),
];
const WT: TI[] = [
  t("pencil", 471, dm), t("pencils", 497, dm), t("editsave", 521, dm), t("refresh", 547), t("sep", 564), t("tools", 579, dm), t("sep", 596), t("exprY", 611),
  t("selattr", 636), t("sel2", 661), t("deselect", 687), t("funnel", 711), t("center", 736), t("pan2", 760), t("zsel2", 786), t("sep", 803),
  t("fields", 818, dm), t("fields", 843, dm), t("abacus", 868), t("sep", 885), t("condFmt", 900), t("sep", 917), t("dock", 931), t("run", 957),
];

const Main = styled.div`
  flex: 1;
  display: flex;
  min-height: 0;
`;
const Sidebar = styled.aside`
  width: 262px;
  flex: none;
  display: flex;
  flex-direction: column;
`;
const PanelHead = styled.div`
  height: 21px;
  flex: none;
  width: 255px;
  display: flex;
  align-items: center;
  padding: 0 0 0 5px;
  font-size: 15.5px;
`;
const PanelBtns = styled.div`
  margin-left: auto;
  display: flex;
  gap: 3px;
`;
const PanelBtn = styled.span`
  width: 11px;
  height: 11px;
  display: block;
  border: 1px solid #66635e;
  border-radius: 2px;
  background: #e4e1dc;
  color: #55524d;
`;
const PanelTools = styled.div`
  height: 29px;
  flex: none;
  width: 255px;
  display: flex;
  align-items: center;
  padding-bottom: 2px;
`;
const TreeBox = styled.div<{ $h: number }>`
  width: 255px;
  height: ${(p) => p.$h}px;
  flex: none;
  background: #fff;
  border: 1px solid #bdbab4;
  display: flex;
  overflow: hidden;
`;
const TreeList = styled.div`
  flex: 1;
  min-width: 0;
`;
const TreeRow = styled.div<{ $indent?: number; $sel?: boolean }>`
  height: 19px;
  display: flex;
  align-items: center;
  padding-left: ${(p) => 2 + (p.$indent ?? 0)}px;
  white-space: nowrap;
  font-size: 15.3px;
  line-height: 17px;
  background: ${(p) => (p.$sel ? "#308cc6" : "transparent")};
  color: ${(p) => (p.$sel ? "#fff" : "inherit")};
`;
const TreeArrow = styled.span<{ $open?: boolean; $none?: boolean }>`
  width: 16px;
  flex: none;
  display: flex;
  justify-content: center;
  margin-right: 4px;
  &::before {
    content: "";
    display: ${(p) => (p.$none ? "none" : "block")};
    ${(p) =>
      p.$open
        ? css`
            border-left: 4.5px solid transparent;
            border-right: 4.5px solid transparent;
            border-top: 5px solid #444;
          `
        : css`
            border-top: 4.5px solid transparent;
            border-bottom: 4.5px solid transparent;
            border-left: 5px solid #444;
          `}
  }
`;
const TreeLabel = styled.span<{ $bold?: boolean; $under?: boolean }>`
  margin-left: 5px;
  padding-bottom: 1px;
  font-weight: ${(p) => (p.$bold ? 700 : 400)};
  letter-spacing: ${(p) => (p.$bold ? "0.45px" : "0")};
  text-decoration: ${(p) => (p.$under ? "underline" : "none")};
`;
const Scroll = styled.div`
  width: 14px;
  flex: none;
  display: flex;
  flex-direction: column;
  border-left: 1px solid #cfccc6;
  background: #fff;
`;
const ScrollBtn = styled.div`
  height: 14px;
  flex: none;
  background: #f1eeea;
  display: flex;
  align-items: center;
  justify-content: center;
`;
const ScrollGroove = styled.div`
  flex: 1;
  border-top: 1px solid #d5d2cc;
`;
const ScrollThumb = styled.div`
  height: 46px;
  flex: none;
  background: #dfdcd7;
  border-top: 1px solid #cfccc6;
`;
const UpArrow = styled.span`
  border-left: 4px solid transparent;
  border-right: 4px solid transparent;
  border-bottom: 4px solid #555;
`;
const Divider = styled.div`
  height: 7px;
  flex: none;
`;
const CheckBox = styled.span`
  width: 13px;
  height: 13px;
  flex: none;
  background: #fff;
  border: 1px solid #a9a6a0;
  border-radius: 1px;
  display: flex;
  align-items: center;
  justify-content: center;
  font-size: 12px;
  line-height: 1;
  font-weight: 700;
  color: #111;
  font-family: "DejaVu Sans", sans-serif;
`;
const LayerIcon = styled.span`
  margin-left: 4px;
  margin-right: -1px;
  width: 20px;
  flex: none;
  display: flex;
  justify-content: center;
`;
const Canvas = styled.main`
  flex: 1;
  min-width: 0;
  background: #fff;
  border: 1px solid #c3c0ba;
  border-right: 0;
  border-bottom: 1px solid #b7b4ad;
  margin-left: -1px;
  padding: 98px 0 0 821px;
`;
const Status = styled.footer`
  height: 32px;
  flex: none;
  display: flex;
  align-items: center;
  background: #eeebe6;
  font-size: 13px;
`;
const SearchBox = styled.div`
  margin-left: 4px;
  width: 320px;
  height: 25px;
  background: #fff;
  border: 1px solid #bdbab4;
  border-radius: 3px;
  display: flex;
  align-items: center;
  padding-left: 7px;
  color: #8f8d89;
  gap: 5px;
  font-size: 15.3px;
`;
const SLabel = styled.span<{ $ml: number; $w?: number; $fs?: number }>`
  margin-left: ${(p) => p.$ml}px;
  ${(p) => (p.$w ? `width: ${p.$w}px;` : "")}
  ${(p) => (p.$fs ? `font-size: ${p.$fs}px;` : "")}
  white-space: nowrap;
  flex: none;
`;
const SInput = styled.div<{ $w: number; $ml: number; $center?: boolean }>`
  width: ${(p) => p.$w}px;
  margin-left: ${(p) => p.$ml}px;
  flex: none;
  height: 23px;
  background: #fff;
  border: 1px solid #bdbab4;
  border-radius: 3px;
  display: flex;
  align-items: center;
  padding-left: ${(p) => (p.$center ? 0 : 4)}px;
  justify-content: ${(p) => (p.$center ? "center" : "flex-start")};
  position: relative;
  overflow: hidden;
`;
const Spin = styled.div`
  margin-left: auto;
  width: 13px;
  align-self: stretch;
  background: #f1eeea;
  border-left: 1px solid #cfccc6;
  display: flex;
  flex-direction: column;
  align-items: center;
  justify-content: center;
  gap: 3px;
`;
const DownA = styled.span`
  border-left: 3.5px solid transparent;
  border-right: 3.5px solid transparent;
  border-top: 5px solid #66645f;
`;
const UpA = styled.span`
  border-left: 3.5px solid transparent;
  border-right: 3.5px solid transparent;
  border-bottom: 5px solid #66645f;
`;
const ComboBtn = styled.div`
  margin-left: auto;
  width: 20px;
  align-self: stretch;
  background: #f1eeea;
  border-left: 1px solid #cfccc6;
  display: flex;
  align-items: center;
  justify-content: center;
`;
const SIcon = styled.span<{ $ml: number }>`
  margin-left: ${(p) => p.$ml}px;
  flex: none;
  display: flex;
`;
const FloatWin = styled.section`
  position: absolute;
  left: 456px;
  top: 133px;
  width: 685px;
  height: 758px;
  display: flex;
  flex-direction: column;
  background: #eeebe6;
  border-radius: 6px 6px 0 0;
  box-shadow: 0 6px 20px rgba(0, 0, 0, 0.5);
`;
const FloatTitle = styled.div`
  height: 30px;
  flex: none;
  position: relative;
  display: flex;
  align-items: center;
  justify-content: center;
  border-radius: 6px 6px 0 0;
  background: linear-gradient(#514f49, #3c3b37);
  color: #d7d4cd;
  font-weight: 700;
  font-size: 15.5px;
  letter-spacing: 0.32px;
`;
const FloatBtns = styled.div`
  position: absolute;
  right: 5px;
  top: 7px;
  display: flex;
  gap: 4px;
`;
const HeaderRow = styled.div`
  height: 21px;
  flex: none;
  display: grid;
  grid-template-columns: 23px repeat(6, 100px) 1fr;
  background: #efece8;
`;
const HeadCell = styled.div`
  display: flex;
  align-items: center;
  justify-content: center;
  background: linear-gradient(#f8f6f2, #eeebe6);
  border-right: 1px solid #cfccc6;
  font-size: 15.5px;
`;
const HeadBlank = styled.div`
  background: #efece8;
`;
const TableBody = styled.div`
  flex: 1;
  min-height: 0;
  background: #fff;
  display: flex;
  flex-direction: column;
  position: relative;
`;
const Row = styled.div`
  height: 30px;
  flex: none;
  display: grid;
  grid-template-columns: 23px repeat(6, 100px) 1fr;
`;
const RowNum = styled.div`
  background: #efece8;
  border-right: 1px solid #c9c6c0;
  border-bottom: 1px solid #c9c6c0;
  display: flex;
  align-items: center;
  padding-left: 3px;
  font-size: 14px;
  padding-top: 2px;
`;
const Cell = styled.div<{ $right?: boolean; $odd?: boolean; $cur?: boolean }>`
  display: flex;
  align-items: center;
  justify-content: ${(p) => (p.$right ? "flex-end" : "flex-start")};
  padding: 0 4px 1px 3px;
  background: ${(p) => (p.$cur ? "#e8f2f9" : p.$odd ? "#fff" : "#f5f4f2")};
  border-right: 1px solid #c9c6c0;
  border-bottom: 1px solid #c9c6c0;
  font-size: ${(p) => (p.$right ? "14.5px" : "15.6px")};
  white-space: nowrap;
  overflow: hidden;
  ${(p) =>
    p.$cur &&
    css`
      border: 2px solid #1fe58f;
      padding-left: 2px;
    `}
`;
const RowFill = styled.div`
  background: #fff;
`;
const NumFill = styled.div`
  width: 23px;
  flex: 1;
  background: #efece8;
`;
const BottomBar = styled.div`
  height: 28px;
  flex: none;
  display: flex;
  align-items: center;
  background: #eeebe6;
  border-top: 1px solid #c9c6c0;
  padding: 0 2px 0 4px;
`;
const FilterBtn = styled.div`
  height: 24px;
  width: 183px;
  display: flex;
  align-items: center;
  gap: 3px;
  padding-left: 4px;
  background: linear-gradient(#f8f6f2, #ece9e4);
  border: 1px solid #b5b2ab;
  border-radius: 3px;
  font-size: 15.5px;
  white-space: nowrap;
  position: relative;
`;
const SmallCaret = styled.span`
  position: absolute;
  right: 2px;
  bottom: 4px;
  border-left: 3px solid transparent;
  border-right: 3px solid transparent;
  border-top: 3px solid #333;
`;
const ViewBtn = styled.div<{ $active?: boolean; $push?: boolean }>`
  width: 23px;
  height: 23px;
  margin-left: ${(p) => (p.$push ? "auto" : "1px")};
  display: flex;
  align-items: center;
  justify-content: center;
  border-radius: 3px;
  border: 1px solid ${(p) => (p.$active ? "#b5b2ab" : "transparent")};
  background: ${(p) => (p.$active ? "#dedbd5" : "transparent")};
`;
const MapSvg = styled.svg`
  display: block;
`;

const ROWS: string[][] = [
  ["Richmond", "", "-0,00076", "0,00034", "-84,142", "37,756"],
  ["Aurora", "", "-0,00079", "0,00035", "-87,685", "39,382"],
  ["Milford", "", "-0,00067", "0,00037", "-74,709", "41,189"],
  ["Pleasant", "", "-0,00074", "0,00035", "-82,022", "38,894"],
  ["Bethany", "", "-0,00067", "0,00037", "-75,05", "41,617"],
  ["Beverly", "", "-0,00072", "0,00035", "-79,995", "38,82"],
  ["Washington", "", "-0,00069", "0,00035", "-77,152", "38,926"],
  ["Brookville", "", "-0,00076", "0,00035", "-84,824", "39,341"],
  ["Stanford", "", "-0,00076", "0,00034", "-84,437", "37,502"],
  ["Huntville", "", "-86,609", "34,797", "-86,609", "34,797"],
  ["Vincennes", "", "-0,00078", "0,00035", "-87,381", "38,737"],
  ["New York", "New York", "-8234229,297", "4970380,761", "-8234229,297", "4970380,761"],
  ["Philadelphia", "Pennsylvania", "-8368867,37", "4858182,367", "-8368867,37", "4858182,367"],
  ["Mercer", "", "-0,00072", "0,00037", "-80,193", "41,23"],
  ["Clearfield", "", "-0,0007", "0,00037", "-78,322", "40,981"],
  ["Glasgow", "", "-0,00077", "0,00033", "-85,741", "36,977"],
  ["Hillsboro", "", "-0,00075", "0,00035", "-83,557", "39,226"],
  ["Hopkinsville", "", "-0,00078", "0,00033", "-87,349", "36,926"],
  ["Columbia", "", "-0,00076", "0,00033", "-85,05", "37,097"],
];

const zx = (x: number) => (x - 24) / 2.376;
const zy = (y: number) => (y - 42) / 3;
const RED = [[198,212],[134,294],[262,294],[198,375],[1423,131],[1294,212],[1358,212],[1229,294],[1358,294],[327,863],[520,863],[585,863],[649,863],[713,863],[907,863],[971,863],[585,945],[649,945],[971,945],[1036,945],[1036,1026]];
const ORANGE = [[1031,407],[1102,407],[1209,407],[779,497],[814,497],[886,497],[922,497],[957,497],[1031,497],[1137,497],[886,542],[814,587],[850,587],[886,587]];
const EAST = [[700,500],[950,360],[1300,240],[1400,230],[1380,380],[1200,620],[1000,800],[980,1050],[900,860],[740,820]];
const inside = (x: number, y: number, poly: number[][]) => {
  let c = false;
  for (let i = 0, j = poly.length - 1; i < poly.length; j = i++) {
    const [xi, yi] = poly[i], [xj, yj] = poly[j];
    if (yi > y !== yj > y && x < ((xj - xi) * (y - yi)) / (yj - yi) + xi) c = !c;
  }
  return c;
};
const COASTS: { pts: number[][]; dx: number; dy: number }[] = [
  { pts: [[1440, 300], [1330, 400], [1230, 480], [1210, 620], [1120, 700], [1040, 790], [1000, 830]], dx: 6, dy: 4 },
  { pts: [[1000, 830], [1030, 950], [1050, 1010], [1010, 1060]], dx: 4, dy: 2.5 },
  { pts: [[770, 870], [700, 890], [600, 895], [510, 910]], dx: 6, dy: -2.5 },
  { pts: [[900, 880], [930, 960], [980, 1030]], dx: 5, dy: 2.5 },
];
const RIVERS = [
  [[100,130],[210,150],[280,190],[420,190],[520,280],[560,460],[570,520],[560,700]],
  [[570,480],[680,500],[750,560],[740,600],[680,700],[660,800],[650,860]],
  [[130,370],[280,440],[450,430],[560,470]],
  [[240,560],[400,600],[550,650],[620,640],[680,690]],
  [[200,680],[300,710],[480,720],[580,720],[640,780]],
  [[230,770],[260,850],[430,780],[490,800],[480,860]],
  [[700,130],[760,110],[830,90],[860,100]],
  [[650,150],[760,190],[860,150],[1000,230],[1040,260]],
  [[480,240],[600,290],[680,350],[710,390],[690,470]],
  [[900,370],[1000,360],[1100,320],[1200,240],[1320,190],[1420,110]],
  [[100,370],[200,340],[260,200]],
  [[880,110],[950,190],[1040,240],[960,300],[930,380]],
];

function MapView() {
  const { specks, hatch, rivers, lakes } = useMemo(() => {
    let seed = 12345;
    const rnd = () => ((seed = (seed * 16807) % 2147483647) - 1) / 2147483646;
    const squig = (x: number, y: number, l: number) => {
      const a = rnd() * 6.28, b = a + (rnd() - 0.5) * 2;
      return `M${zx(x).toFixed(1)} ${zy(y).toFixed(1)}l${(Math.cos(a) * l).toFixed(1)} ${(Math.sin(a) * l).toFixed(1)}l${(Math.cos(b) * l).toFixed(1)} ${(Math.sin(b) * l).toFixed(1)}`;
    };
    let sp = "";
    for (let i = 0; i < 6000; i++) {
      const x = 680 + rnd() * 780, y = 220 + rnd() * 840;
      if (inside(x, y, EAST)) sp += squig(x, y, 0.5 + rnd() * 1.3);
    }
    for (let i = 0; i < 700; i++) sp += squig(70 + rnd() * 1350, 90 + rnd() * 960, 0.4 + rnd() * 0.9);
    let h = "";
    COASTS.forEach(({ pts, dx, dy }) => {
      for (let s = 0; s < pts.length - 1; s++) {
        const [a, b] = [pts[s], pts[s + 1]];
        const n = Math.ceil(Math.hypot(b[0] - a[0], b[1] - a[1]) / 3.5);
        for (let k = 0; k < n; k++) {
          const px = zx(a[0] + ((b[0] - a[0]) * k) / n) + (rnd() - 0.5) * 12, py = zy(a[1] + ((b[1] - a[1]) * k) / n) + (rnd() - 0.5) * 8;
          const f = 0.8 + rnd() * 1.2;
          h += `M${px.toFixed(1)} ${py.toFixed(1)}l${(dx * f).toFixed(1)} ${(dy * f).toFixed(1)}`;
        }
      }
    });
    let rv = "";
    RIVERS.forEach((r) => {
      r.forEach((p, i) => {
        if (i === 0) rv += `M${zx(p[0]).toFixed(1)} ${zy(p[1]).toFixed(1)}`;
        else {
          const q = r[i - 1];
          for (let k = 1; k <= 7; k++) {
            const j = k === 7 ? 0 : 1;
            rv += `L${(zx(q[0] + ((p[0] - q[0]) * k) / 7) + j * (rnd() - 0.5) * 5).toFixed(1)} ${(zy(q[1] + ((p[1] - q[1]) * k) / 7) + j * (rnd() - 0.5) * 5).toFixed(1)}`;
          }
        }
      });
    });
    let lk = "";
    for (let y = 60; y < 118; y += 2.6) {
      const w = 12 + rnd() * 14;
      lk += `M${(320 + (y - 60) * 0.05 + rnd() * 6).toFixed(1)} ${y.toFixed(1)}h${w.toFixed(1)}`;
    }
    for (let y = 58; y < 86; y += 2.6) lk += `M${(392 + rnd() * 16).toFixed(1)} ${y.toFixed(1)}h${(8 + rnd() * 14).toFixed(1)}`;
    for (let y = 22; y < 36; y += 2.6) lk += `M${(275 + rnd() * 10).toFixed(1)} ${y.toFixed(1)}h${(24 + rnd() * 22).toFixed(1)}`;
    return { specks: sp, hatch: h, rivers: rv, lakes: lk };
  }, []);
  return (
    <MapSvg viewBox="0 0 637 363" width={637} height={363}>
      <defs>
        <filter id="soft"><feGaussianBlur stdDeviation=".7" /></filter>
        <filter id="paper">
          <feTurbulence type="fractalNoise" baseFrequency=".5" numOctaves="2" seed="4" />
          <feColorMatrix values="0 0 0 0 .5  0 0 0 0 .44  0 0 0 0 .33  0 0 0 .12 0" />
          <feComposite in2="SourceAlpha" operator="in" />
        </filter>
        <clipPath id="sheet"><path d="M0 18Q318-30 637 16L573 363Q318 333 53 363Z" /></clipPath>
      </defs>
      <rect width="637" height="363" fill="#000" />
      <path d="M0 18Q318-30 637 16L573 363Q318 333 53 363Z" fill="#efe9de" />
      <path d="M0 18Q318-30 637 16L573 363Q318 333 53 363Z" filter="url(#paper)" />
      <g clipPath="url(#sheet)">
        <path d="M8 26Q318-18 628 24L566 356Q318 326 60 356Z" fill="none" stroke="#6d695f" strokeDasharray="7 3" strokeWidth=".8" />
        <path d="M30 90Q318 60 610 90M50 200Q318 170 590 200M60 290Q318 265 580 290M150 8 170 340M310 0V335M470 5 450 340" fill="none" stroke="#dcd6c9" strokeWidth=".6" />
        <path d={hatch} fill="none" stroke="#8b877c" strokeWidth="1" opacity=".42" filter="url(#soft)" />
        <path d={lakes} fill="none" stroke="#8b877c" strokeWidth="1.1" opacity=".5" filter="url(#soft)" />
        <path d={rivers} fill="none" stroke="#6a665c" strokeWidth=".6" strokeDasharray="4 1.5" opacity=".7" />
        <path d={specks} fill="none" stroke="#3f3c35" strokeWidth=".7" opacity=".62" />
      </g>
      <text x="83" y="322" fontSize="13" fontFamily="Liberation Serif" letterSpacing="1.5" fill="#7d786d" transform="rotate(-5 83 322)">UNITED STATES</text>
      <text x="95" y="342" fontSize="7" fontFamily="Liberation Serif" letterSpacing="2" fill="#7d786d" transform="rotate(-2 95 342)">NORTH AMERICA</text>
      {RED.map(([x, y], i) => (
        <circle key={i} cx={zx(x)} cy={zy(y)} r="3" fill="#e6001c" stroke="#3a2416" strokeWidth=".7" />
      ))}
      {ORANGE.map(([x, y], i) => (
        <circle key={i} cx={zx(x)} cy={zy(y)} r="4.7" fill="#f79a12" stroke="#4a3412" strokeWidth=".7" />
      ))}
    </MapSvg>
  );
}

const DOCK_ITEMS: { k: string; h: number; s: number; pips?: number; active?: boolean }[] = [
  { k: "firefox", h: 64, s: 54, pips: 1 },
  { k: "thunder", h: 64, s: 52 },
  { k: "files", h: 64, s: 52, pips: 1 },
  { k: "writer", h: 64, s: 52 },
  { k: "store", h: 64, s: 52 },
  { k: "r", h: 64, s: 48 },
  { k: "term", h: 64, s: 50 },
  { k: "sublime", h: 64, s: 50 },
  { k: "qgis", h: 62, s: 50, pips: 4, active: true },
  { k: "gedit", h: 64, s: 48, pips: 1 },
  { k: "roller", h: 66, s: 50, pips: 2 },
];

const BROWSER: { l: string; i: string; a?: "c" | "o"; ind?: number }[] = [
  { l: "Favoriten", i: "star" },
  { l: "Projektverzeichnis", i: "proj", a: "c" },
  { l: "Home", i: "home", a: "c" },
  { l: "/", i: "dir", a: "c" },
  { l: "GeoPackage", i: "block" },
  { l: "SpatiaLite", i: "spatial" },
  { l: "PostGIS", i: "pg" },
  { l: "MSSQL", i: "mssql" },
  { l: "DB2", i: "db2" },
  { l: "WMS/WMTS", i: "wms" },
  { l: "XYZ Tiles", i: "wms", a: "o" },
  { l: "Google - Real Maps", i: "tiles", ind: 20 },
  { l: "Google - Roads", i: "tiles", ind: 20 },
  { l: "Google - Satelite", i: "tiles", ind: 20 },
  { l: "Google - Terrain", i: "tiles", ind: 20 },
  { l: "OpenStreetMap", i: "tiles", ind: 20 },
  { l: "WCS", i: "wcs" },
  { l: "WFS", i: "wfs" },
  { l: "OWS", i: "ows" },
];

const MENU: [string, string, string, number][] = [
  ["", "P", "rojekt", 64],
  ["", "B", "earbeiten", 89.5],
  ["", "A", "nsicht", 65.5],
  ["", "L", "ayer", 50.5],
  ["", "E", "instellungen", 107.5],
  ["Er", "w", "eiterungen", 115.5],
  ["", "V", "ektor", 60.5],
  ["", "R", "aster", 58],
  ["Da", "t", "enbank", 88],
  ["", "W", "eb", 45.5],
  ["", "N", "etz", 46.5],
  ["", "V", "erarbeitung", 104.5],
  ["", "H", "ilfe", 40],
];

const TrayIcon = ({ children }: { children: React.ReactNode }) => (
  <IcoSvg viewBox="0 0 16 16" width={16} height={16}>
    {children}
  </IcoSvg>
);
const GlyphSvg = styled.svg`
  display: block;
`;
const FloatGlyph = () => (
  <GlyphSvg width="9" height="9" viewBox="0 0 9 9">
    <rect x="3" y="1" width="5" height="5" rx="1" fill="none" stroke="currentColor" />
    <rect x="1" y="3" width="5" height="5" rx="1" fill="#e4e1dc" stroke="currentColor" />
  </GlyphSvg>
);
const CloseGlyph = () => (
  <GlyphSvg width="9" height="9" viewBox="0 0 9 9">
    <path d="M1.5 1.5l6 6M7.5 1.5l-6 6" stroke="currentColor" strokeWidth="1.5" />
  </GlyphSvg>
);
const PanelControls = () => (
  <PanelBtns>
    <PanelBtn><FloatGlyph /></PanelBtn>
    <PanelBtn><CloseGlyph /></PanelBtn>
  </PanelBtns>
);

export default function App() {
  return (
    <Root>
      <Global />
      <TopBar>
        <TopItem $ml={12} $w={82}>Aktivitäten</TopItem>
        <TopItem $ml={19.5} $w={17}>
          <IcoSvg viewBox="0 0 48 48" width={17} height={17}>{DOCK.qgis}</IcoSvg>
        </TopItem>
        <TopItem $ml={6.5} $w={118}>
          QGIS-Desktop
          <Caret $ml={6} />
        </TopItem>
        <TopItem $ml={711.5} $w={70} $fs={14}>
          Di 00:44
          <RecDot />
        </TopItem>
        <Tray>
          <TrayIcon>
            <path d="M6 0h4v4H6zM1 10h5v6H1zM10 10h5v6h-5zM8 4v3M3.5 10V7h9v3" fill="#d9d6cf" stroke="#d9d6cf" strokeWidth=".6" />
          </TrayIcon>
          <TrayIcon>
            <path d="M1 5h3l4-4v14l-4-4H1z" fill="#d9d6cf" />
            <path d="M10 4c2 2 2 6 0 8M12 2c3 3 3 9 0 12" fill="none" stroke="#9b9890" strokeWidth="1.2" />
          </TrayIcon>
          <TrayIcon>
            <path d="M6 0h4v2h3v14H3V2h3z" fill="none" stroke="#d9d6cf" strokeWidth="1.2" />
            <path d="M9 4 5 9h3l-1 5 4-6H8z" fill="#d9d6cf" />
          </TrayIcon>
          <Caret $ml={0} />
        </Tray>
      </TopBar>
      <Body>
        <Dock>
          {DOCK_ITEMS.map((d) => (
            <DockSlot key={d.k} $h={d.h} $active={d.active}>
              {d.pips ? (
                <Pips>
                  {Array.from({ length: d.pips }).map((_, j) => (
                    <Pip key={j} />
                  ))}
                </Pips>
              ) : null}
              <IcoSvg viewBox="0 0 48 48" width={d.s} height={d.s}>
                {DOCK[d.k]}
              </IcoSvg>
            </DockSlot>
          ))}
          <AppsGrid>
            {Array.from({ length: 9 }).map((_, i) => (
              <AppDot key={i} />
            ))}
          </AppsGrid>
        </Dock>
        <AppWin>
          <TitleBar>
            *Homework1 - QGIS
            <WinBtns>
              <WinBtn $bg="#5a5954" $fg="#3d3c37"><svg width="8" height="8"><path d="M0 4h8" stroke="currentColor" strokeWidth="1.5" /></svg></WinBtn>
              <WinBtn $bg="#5a5954" $fg="#3d3c37"><svg width="8" height="8"><rect x=".5" y=".5" width="7" height="7" fill="none" stroke="currentColor" /></svg></WinBtn>
              <WinBtn $bg="#5a5954" $fg="#3d3c37"><svg width="8" height="8"><path d="M1 1l6 6M7 1 1 7" stroke="currentColor" /></svg></WinBtn>
            </WinBtns>
          </TitleBar>
          <MenuBar>
            {MENU.map(([a, u, b, w]) => (
              <MenuItem key={a + u + b} $w={w}>
                {a}
                <u>{u}</u>
                {b}
              </MenuItem>
            ))}
          </MenuBar>
          <Toolbar>
            <Tools items={T1} start={67} />
          </Toolbar>
          <Toolbar $last>
            <Tools items={T2} start={67} />
          </Toolbar>
          <Main>
            <Sidebar>
              <PanelHead>
                Browser
                <PanelControls />
              </PanelHead>
              <PanelTools>
                <Tools start={67} s={17} items={[t("panelAdd", 83), t("refresh", 108), t("funnel", 133), t("collapse", 158), t("info", 183)]} />
              </PanelTools>
              <TreeBox $h={365}>
                <TreeList>
                  {BROWSER.map((r) => (
                    <TreeRow key={r.l} $indent={r.ind}>
                      <TreeArrow $none={!r.a} $open={r.a === "o"} />
                      <Ico k={r.i} s={18} />
                      <TreeLabel>{r.l}</TreeLabel>
                    </TreeRow>
                  ))}
                </TreeList>
                <Scroll>
                  <ScrollBtn><UpArrow /></ScrollBtn>
                  <ScrollGroove />
                  <ScrollThumb />
                  <ScrollBtn><DownA /></ScrollBtn>
                </Scroll>
              </TreeBox>
              <Divider />
              <PanelHead>
                Layer
                <PanelControls />
              </PanelHead>
              <PanelTools>
                <Tools start={67} s={18} items={[t("brush", 83), t("addgroup", 108), t("eye", 133), t("funnel", 158), t("expr", 183), t("drop", 200), t("expand", 221), t("collapse", 245), t("remove", 270)]} />
              </PanelTools>
              <TreeBox $h={291}>
                <TreeList>
                  <TreeRow $indent={22} $sel>
                    <CheckBox>✓</CheckBox>
                    <LayerIcon><Ico k="point" s={18} /></LayerIcon>
                    <TreeLabel $bold $under>info</TreeLabel>
                  </TreeRow>
                  {[0, 1, 2].map((i) => (
                    <TreeRow key={i} $indent={22}>
                      <CheckBox>✓</CheckBox>
                      <LayerIcon><Ico k="tiles" s={18} /></LayerIcon>
                      <TreeLabel $bold>US_eastStates_03_modi...</TreeLabel>
                    </TreeRow>
                  ))}
                  <TreeRow $indent={22}>
                    <CheckBox />
                    <LayerIcon><Ico k="grp" s={16} /></LayerIcon>
                    <TreeLabel>group1</TreeLabel>
                  </TreeRow>
                </TreeList>
              </TreeBox>
            </Sidebar>
            <Canvas>
              <MapView />
            </Canvas>
          </Main>
          <Status>
            <SearchBox>
              <Ico k="search" s={15} />
              Zu suchender Typ (Strg+K)
            </SearchBox>
            <SLabel $ml={8} $w={589} $fs={13.4}>Eintrag der Legende gelöscht.</SLabel>
            <SLabel $ml={0} $w={64}>Koordinate</SLabel>
            <SInput $w={102} $ml={0} $center>-171.40,23.69</SInput>
            <SIcon $ml={3}><Ico k="pointer" s={20} /></SIcon>
            <SLabel $ml={11} $w={51}>Maßstab</SLabel>
            <SInput $w={96} $ml={0}>1:279<ComboBtn><DownA /></ComboBtn></SInput>
            <SIcon $ml={10}><Ico k="lock" s={18} /></SIcon>
            <SLabel $ml={5} $w={80}>Vergrößerung</SLabel>
            <SInput $w={97} $ml={0}>100%<Spin><UpA /><DownA /></Spin></SInput>
            <SLabel $ml={10} $w={57}>Drehung</SLabel>
            <SInput $w={93} $ml={0}>0,0 °<Spin><UpA /><DownA /></Spin></SInput>
            <SIcon $ml={8}><CheckBox>✓</CheckBox></SIcon>
            <SLabel $ml={5} $w={49}>Zeichnen</SLabel>
            <SIcon $ml={18}><Ico k="crs" s={16} /></SIcon>
            <SLabel $ml={4} $w={58}>EPSG:3857</SLabel>
            <SIcon $ml={20}><Ico k="msg" s={18} /></SIcon>
          </Status>
        </AppWin>
      </Body>

      <FloatWin>
        <FloatTitle>
          info :: Objekte gesamt:19, gefiltert: 19, gewählt: 0
          <FloatBtns>
            <WinBtn $bg="#75736c" $fg="#3d3c37"><svg width="8" height="8"><path d="M0 4h8" stroke="currentColor" strokeWidth="1.5" /></svg></WinBtn>
            <WinBtn $bg="#75736c" $fg="#3d3c37"><svg width="8" height="8"><rect x=".5" y=".5" width="7" height="7" fill="none" stroke="currentColor" /></svg></WinBtn>
            <WinBtn $bg="#e2562c" $fg="#3d3c37"><svg width="8" height="8"><path d="M1 1l6 6M7 1 1 7" stroke="currentColor" /></svg></WinBtn>
          </FloatBtns>
        </FloatTitle>
        <WinToolbar>
          <Tools items={WT} start={456} s={18} />
        </WinToolbar>
        <HeaderRow>
          <HeadCell />
          {["ity", "state", "lon", "lat", "lon1", "lat1"].map((h) => (
            <HeadCell key={h}>{h}</HeadCell>
          ))}
          <HeadBlank />
        </HeaderRow>
        <TableBody>
          {ROWS.map((r, i) => (
            <Row key={i}>
              <RowNum>{i + 1}</RowNum>
              {r.map((v, c) => (
                <Cell key={c} $right={c > 1} $odd={i % 2 === 0} $cur={i === 0 && c === 0}>
                  {v}
                </Cell>
              ))}
              <RowFill />
            </Row>
          ))}
          <NumFill />
        </TableBody>
        <BottomBar>
          <FilterBtn>
            <Ico k="funnel" s={17} />
            Alle Objekte anzeigen
            <SmallCaret />
          </FilterBtn>
          <ViewBtn $push>
            <Ico k="form" s={18} />
          </ViewBtn>
          <ViewBtn $active>
            <Ico k="grid" s={18} />
          </ViewBtn>
        </BottomBar>
      </FloatWin>
    </Root>
  );
}
